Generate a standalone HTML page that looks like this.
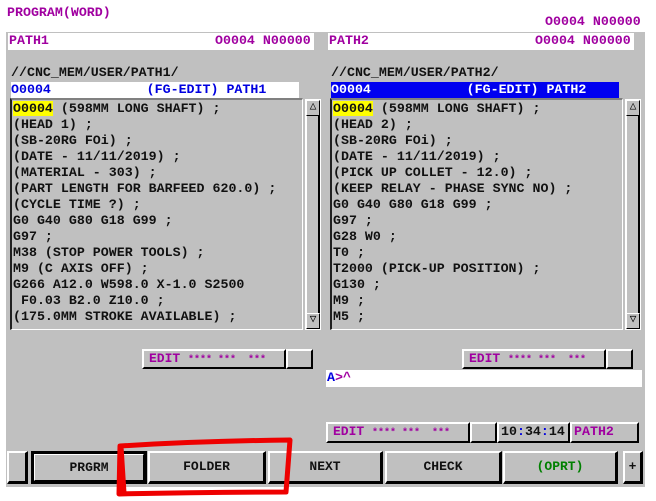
<!DOCTYPE html>
<html><head><meta charset="utf-8"><style>
*{margin:0;padding:0;box-sizing:border-box}
body{width:656px;height:501px;background:#fff;position:relative;overflow:hidden;font-family:"Liberation Mono","DejaVu Sans Mono",monospace;font-weight:bold;font-size:13.3px;line-height:16px}
.a{position:absolute;white-space:pre}
.mag{color:#a000a0}
.blu{color:#0000e0}
.gray{position:absolute;left:6px;top:32px;width:639px;height:455px;background:#c0c0c0}
.code{position:absolute;border-left:2px solid #202020;border-top:2px solid #808080;border-right:1px solid #fff;border-bottom:1px solid #fff;padding-left:1px}
.sb{position:absolute;width:16px;border:1px solid #fff;border-left-color:#fff}
.sbb{position:absolute;left:0;width:14px;height:16px;background:#c0c0c0;border:1px solid #fff;border-right-color:#000;border-bottom-color:#000;font-size:11px;line-height:13px;text-align:center;color:#000;font-weight:normal}
.bx{position:absolute;border:2px solid;border-color:#fff #000 #000 #fff;background:#c0c0c0}
.sk{position:absolute;border:2px solid;border-color:#fff #000 #000 #fff;border-width:2px 3px 3px 2px;background:#c0c0c0;text-align:center;line-height:27px;color:#111;font-size:13px}
.hl{background:#ffff00}
</style></head><body>
<div class="a mag" style="left:7px;top:5px">PROGRAM(WORD)</div>
<div class="a mag" style="left:545px;top:14px">O0004 N00000</div>
<div class="gray"></div>
<div class="a" style="left:8px;top:33px;width:306px;height:17px;background:#fff"></div>
<div class="a mag" style="left:9px;top:33px">PATH1</div>
<div class="a mag" style="left:215px;top:33px">O0004 N00000</div>
<div class="a" style="left:328px;top:33px;width:306px;height:17px;background:#fff"></div>
<div class="a mag" style="left:329px;top:33px">PATH2</div>
<div class="a mag" style="left:535px;top:33px">O0004 N00000</div>

<div class="a" style="left:11px;top:65px;color:#111">//CNC_MEM/USER/PATH1/</div>
<div class="a" style="left:11px;top:82px;width:288px;height:16px;background:#fff"></div>
<div class="a blu" style="left:11px;top:82px">O0004            (FG-EDIT) PATH1</div>
<div class="a" style="left:331px;top:65px;color:#111">//CNC_MEM/USER/PATH2/</div>
<div class="a" style="left:331px;top:82px;width:288px;height:16px;background:#0000f0"></div>
<div class="a" style="left:331px;top:82px;color:#fff">O0004            (FG-EDIT) PATH2</div>

<div class="code" style="left:10px;top:98px;width:293px;height:232px">
<div class="a" style="left:1px;top:1px;color:#111"><span class="hl">O0004</span> (598MM LONG SHAFT) ;
(HEAD 1) ;
(SB-20RG FOi) ;
(DATE - 11/11/2019) ;
(MATERIAL - 303) ;
(PART LENGTH FOR BARFEED 620.0) ;
(CYCLE TIME ?) ;
G0 G40 G80 G18 G99 ;
G97 ;
M38 (STOP POWER TOOLS) ;
M9 (C AXIS OFF) ;
G266 A12.0 W598.0 X-1.0 S2500
 F0.03 B2.0 Z10.0 ;
(175.0MM STROKE AVAILABLE) ;</div></div>
<div class="sb" style="left:305px;top:99px;height:231px;border-color:#fff"><div class="a" style="left:0;top:16px;width:14px;height:198px;border-left:1px solid #fff;border-right:2px solid #000"></div><div class="sbb" style="top:0">△</div><div class="sbb" style="bottom:0">▽</div></div>

<div class="code" style="left:330px;top:98px;width:293px;height:232px">
<div class="a" style="left:1px;top:1px;color:#111"><span class="hl">O0004</span> (598MM LONG SHAFT) ;
(HEAD 2) ;
(SB-20RG FOi) ;
(DATE - 11/11/2019) ;
(PICK UP COLLET - 12.0) ;
(KEEP RELAY - PHASE SYNC NO) ;
G0 G40 G80 G18 G99 ;
G97 ;
G28 W0 ;
T0 ;
T2000 (PICK-UP POSITION) ;
G130 ;
M9 ;
M5 ;</div></div>
<div class="sb" style="left:625px;top:99px;height:231px"><div class="a" style="left:0;top:16px;width:14px;height:198px;border-left:1px solid #fff;border-right:2px solid #000"></div><div class="sbb" style="top:0">△</div><div class="sbb" style="bottom:0">▽</div></div>

<div class="bx" style="left:142px;top:349px;width:144px;height:20px"></div>
<div class="a mag" style="left:149px;top:351px;font-size:13px">EDIT <span style="font-size:10px">**** ***  ***</span></div>
<div class="bx" style="left:286px;top:349px;width:27px;height:20px"></div>
<div class="bx" style="left:462px;top:349px;width:144px;height:20px"></div>
<div class="a mag" style="left:469px;top:351px;font-size:13px">EDIT <span style="font-size:10px">**** ***  ***</span></div>
<div class="bx" style="left:606px;top:349px;width:27px;height:20px"></div>

<div class="a" style="left:326px;top:370px;width:316px;height:17px;background:#fff"></div>
<div class="a" style="left:327px;top:370px"><span class="blu">A</span><span class="mag">&gt;^</span></div>

<div class="bx" style="left:326px;top:422px;width:144px;height:21px"></div>
<div class="a mag" style="left:333px;top:424px;font-size:13px">EDIT <span style="font-size:10px">**** ***  ***</span></div>
<div class="bx" style="left:470px;top:422px;width:27px;height:21px"></div>
<div class="bx" style="left:497px;top:422px;width:73px;height:21px"></div>
<div class="a" style="left:501px;top:424px;color:#111">10<span class="blu">:</span>34<span class="blu">:</span>14</div>
<div class="bx" style="left:570px;top:422px;width:69px;height:21px"></div>
<div class="a mag" style="left:574px;top:424px">PATH2</div>

<div class="sk" style="left:7px;top:451px;width:21px;height:33px"></div>
<div class="sk" style="left:31px;top:451px;width:116px;height:33px;border:3px solid #000;border-right-width:3px"><div style="border:1px solid #fff;border-right-color:#000;border-bottom-color:#000;height:27px;line-height:25px">PRGRM</div></div>
<div class="sk" style="left:148px;top:451px;width:118px;height:33px">FOLDER</div>
<div class="sk" style="left:268px;top:451px;width:115px;height:33px">NEXT</div>
<div class="sk" style="left:385px;top:451px;width:117px;height:33px">CHECK</div>
<div class="sk" style="left:503px;top:451px;width:115px;height:33px;color:#008000">(OPRT)</div>
<div class="sk" style="left:623px;top:451px;width:20px;height:33px">+</div>

<svg class="a" style="left:0;top:0" width="656" height="501">
<path d="M120 446 Q200 441 290 440 L286 492 Q200 492 119 494 Z M121 446 L124 493" fill="none" stroke="#ee0000" stroke-width="5" stroke-linejoin="round"/>
</svg>
</body></html>
